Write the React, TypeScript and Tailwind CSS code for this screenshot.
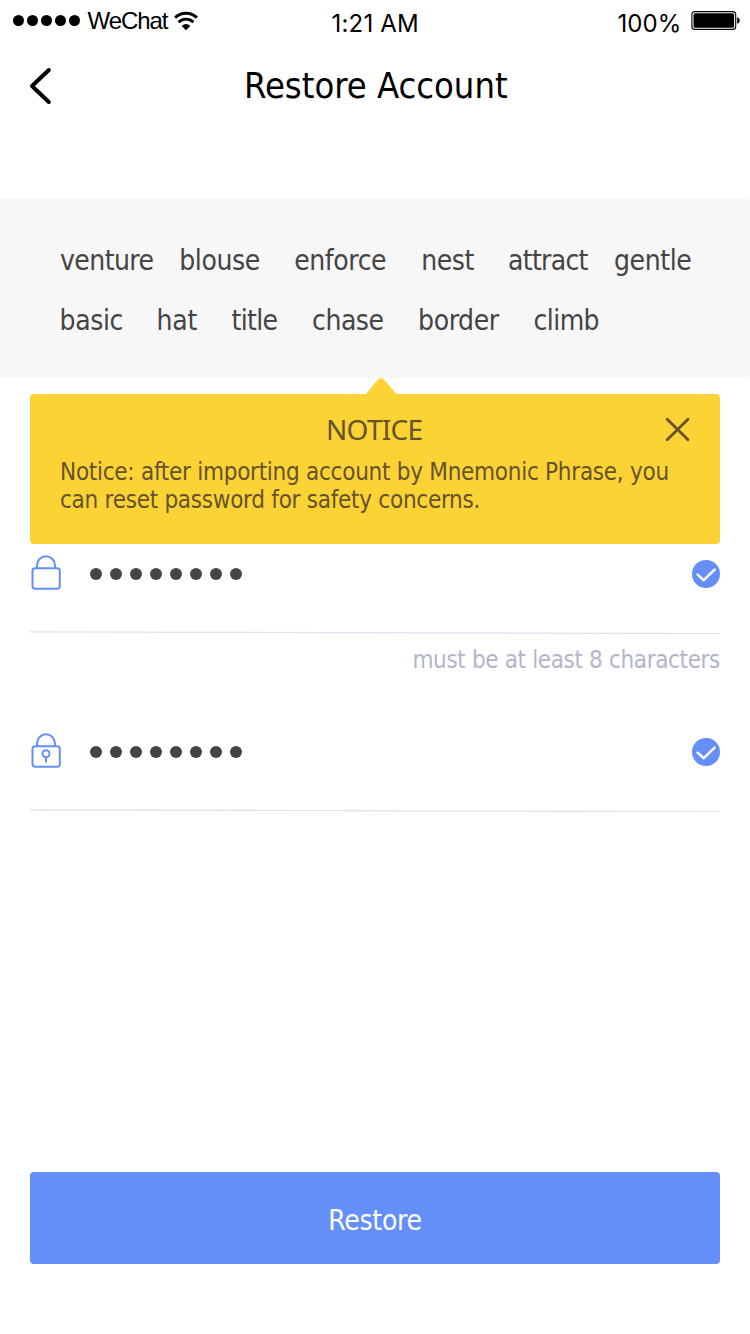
const FONT = "font-['DejaVu_Sans_Condensed','DejaVu_Sans',sans-serif]";

type Word = { text: string; cls: string };

const rowOne: Word[] = [
  { text: "venture", cls: "w-[119.2px] tracking-[-0.57px]" },
  { text: "blouse", cls: "w-[115px] tracking-[-0.37px]" },
  { text: "enforce", cls: "w-[127px] tracking-[-0.4px]" },
  { text: "nest", cls: "w-[86.8px] tracking-[-0.4px]" },
  { text: "attract", cls: "w-[106px] tracking-[-0.7px]" },
  { text: "gentle", cls: "tracking-[-0.4px]" },
];

const rowTwo: Word[] = [
  { text: "basic", cls: "w-[96.8px] tracking-[-0.42px]" },
  { text: "hat", cls: "w-[75.2px] tracking-[-0.2px]" },
  { text: "title", cls: "w-[80.5px] tracking-[-0.7px]" },
  { text: "chase", cls: "w-[106px] tracking-[-0.5px]" },
  { text: "border", cls: "w-[115.5px] tracking-[-0.42px]" },
  { text: "climb", cls: "tracking-[-0.6px]" },
];

function WordRow({ words, className }: { words: Word[]; className: string }) {
  return (
    <div className={`flex h-[60px] items-center whitespace-nowrap ${className}`}>
      {words.map((w) => (
        <span key={w.text} className={`shrink-0 ${w.cls}`}>
          {w.text}
        </span>
      ))}
    </div>
  );
}

function StatusBar() {
  return (
    <div className="flex h-[44px] items-start text-[24px] leading-[30px] whitespace-nowrap text-black">
      <div className="flex w-[331.5px] shrink-0 items-start pl-[13px]">
        <div className="mt-[15px] flex gap-[3px]">
          {[0, 1, 2, 3, 4].map((i) => (
            <span key={i} className="size-[11px] rounded-full bg-black" />
          ))}
        </div>
        <span className="mt-[6px] ml-[7.5px] w-[86.5px] font-['Liberation_Sans',sans-serif] tracking-[-1.05px]">
          WeChat
        </span>
        <svg className="mt-[11px]" width="24" height="20" viewBox="0 0 24 20" fill="none" stroke="#000">
          <path d="M1.1 6.6A15.6 15.6 0 0 1 22.9 6.6" strokeWidth="3" />
          <path d="M4.6 11.1A10.6 10.6 0 0 1 19.4 11.1" strokeWidth="2.9" />
          <path d="M7.7 15Q12 11.2 16.3 15L12 19.2Z" fill="#000" stroke="none" />
        </svg>
      </div>
      <span className="mt-[9px] w-[286px] shrink-0 font-['Inter',sans-serif] tracking-[0.2px]">1:21 AM</span>
      <span className="mt-[9px] w-[73.5px] shrink-0 font-['Inter',sans-serif] tracking-[0.1px]">100%</span>
      <svg className="mt-[10px]" width="50" height="22" viewBox="0 0 50 22">
        <rect x="0.9" y="1.6" width="43.8" height="17.8" rx="3" fill="none" stroke="#000" strokeWidth="1.1" />
        <rect x="2.5" y="3.2" width="40.6" height="14.6" rx="1.6" />
        <path d="M46.2 7.3C49.6 8 49.6 13 46.2 13.7Z" />
      </svg>
    </div>
  );
}

function Lock({ keyhole }: { keyhole?: boolean }) {
  return (
    <svg width="32" height="36" viewBox="30 554 32 36" fill="none" stroke="#648ff9" strokeWidth="2">
      <rect x="32.5" y="568.3" width="27.3" height="20.4" rx="2.6" />
      <path d="M37 568.3V565.3a9 9 0 0 1 18 0v3" />
      {keyhole && (
        <>
          <circle cx="46" cy="575.7" r="3.5" />
          <path d="M46 579.2v5.4" />
        </>
      )}
    </svg>
  );
}

function PasswordField({ keyhole, className }: { keyhole?: boolean; className: string }) {
  return (
    <div className={`shrink-0 ${className}`}>
      <div className="flex h-[40px] items-center">
        <Lock keyhole={keyhole} />
        <div className="mt-[4px] ml-[28px] flex flex-1 gap-[8px]">
          {[0, 1, 2, 3, 4, 5, 6, 7].map((i) => (
            <span key={i} className="size-[12px] rounded-full bg-[#444]" />
          ))}
        </div>
        <svg className="mt-[4px]" width="28" height="28" viewBox="0 0 28 28" fill="none">
          <circle cx="14" cy="14" r="14" fill="#648ff9" />
          <path
            d="M5.6 14.6L11.8 20.2L22.6 9.6"
            stroke="#fff"
            strokeWidth="2.5"
            strokeLinecap="round"
            strokeLinejoin="round"
          />
        </svg>
      </div>
      <svg className="mt-[38px] block" width="690" height="4" viewBox="0 0 690 4">
        <path d="M0 1.9L690 3.6" stroke="#dde2ec" strokeWidth="1.3" />
      </svg>
    </div>
  );
}

export default function App() {
  return (
    <div className={`flex h-[1334px] w-[750px] flex-col overflow-hidden bg-white ${FONT}`}>
      <StatusBar />
      <header className="flex h-[154px] items-start">
        <button className="mt-[22px] ml-[28px] w-[216px] shrink-0" aria-label="Back">
          <svg width="26" height="40" viewBox="28 66 26 40" fill="none">
            <path
              d="M48.8 70L32 86L48.8 102"
              stroke="#000"
              strokeWidth="4"
              strokeLinecap="round"
              strokeLinejoin="round"
            />
          </svg>
        </button>
        <h1 className="mt-[18px] text-[36px] leading-[48px] whitespace-nowrap text-black">Restore Account</h1>
      </header>

      <section className="h-[180px] shrink-0 rounded-[5px] bg-[#f7f7f7] pt-[33px] text-[28px] leading-[40px] text-[#444]">
        <WordRow words={rowOne} className="pl-[60px]" />
        <WordRow words={rowTwo} className="pl-[59.6px]" />
      </section>

      <div className="flex h-[16px] shrink-0 pl-[366px]">
        <svg width="31" height="16" viewBox="0 0 31 16">
          <path d="M0 16L11.8 1.7Q15 -1.6 18.2 1.7L30.4 16Z" fill="#fbd335" />
        </svg>
      </div>
      <section className="mx-[30px] h-[150px] shrink-0 rounded-[4px] bg-[#fbd335] px-[30px] pt-[15px] text-[#66522b]">
        <div className="flex h-[42px] items-start">
          <h2 className="ml-[266px] flex-1 font-['Noto_Sans',sans-serif] text-[28px] leading-[40px] tracking-[-0.7px]">
            NOTICE
          </h2>
          <svg className="mt-[7px]" width="26" height="26" viewBox="0 0 26 26">
            <path d="M3.2 3.2L24 23.8M24 3.2L3.2 23.8" stroke="#66522b" strokeWidth="2.8" strokeLinecap="round" />
          </svg>
        </div>
        <p className="mt-[7px] text-[24px] leading-[28px] tracking-[-0.27px] whitespace-nowrap">
          Notice: after importing account by Mnemonic Phrase, you
          <br />
          can reset password for safety concerns.
        </p>
      </section>

      <div className="flex flex-1 flex-col px-[30px]">
        <PasswordField className="mt-[8px]" />
        <p className="mt-[10px] text-right text-[24px] leading-[32px] tracking-[-0.36px] text-[#b3b5c9]">
          must be at least 8 characters
        </p>
        <PasswordField keyhole className="mt-[54px]" />
        <button className="mt-auto mb-[70px] flex h-[92px] shrink-0 items-start justify-center rounded-[4px] bg-[#648ff9] pt-[29px] text-[28px] leading-[40px] tracking-[-0.3px] text-white">
          Restore
        </button>
      </div>
    </div>
  );
}
